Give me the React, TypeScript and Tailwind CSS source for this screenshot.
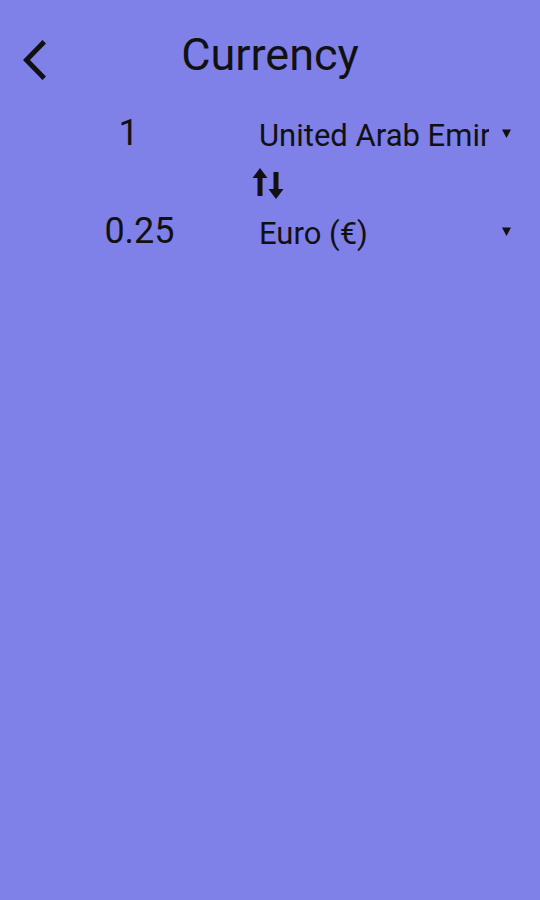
import React from 'react';

const Caret = () => (
  <svg width="9" height="9" viewBox="0 0 9 9" className="shrink-0">
    <path d="M0 0.5h9L4.5 9z" fill="#111" />
  </svg>
);

const CurrencyRow = ({ value, label, shift }: { value: string; label: string; shift: string }) => (
  <div className="flex items-start h-[46px]">
    <div className={`w-[259px] shrink-0 text-center text-[36px] leading-[46px] ${shift}`}>{value}</div>
    <div className="flex items-start h-[46px] w-[252px]">
      <span className="mt-[3px] w-[230px] overflow-hidden whitespace-nowrap text-[31px] leading-[46px]">{label}</span>
      <span className="ml-auto mt-[19px]">
        <Caret />
      </span>
    </div>
  </div>
);

const App = () => {
  return (
    <div className="w-full h-[900px] bg-[#8080e9] text-[#111] font-['Roboto',sans-serif]">
      {/* Toolbar */}
      <div className="grid grid-cols-[1fr_auto_1fr] pt-[29px]">
        <div className="pl-[23px] pt-[11px]">
          <svg width="23" height="40" viewBox="0 2.1 11.67 19.8" preserveAspectRatio="none">
            <path d="M11.67 3.87L9.9 2.1 0 12l9.9 9.9 1.77-1.77L3.54 12z" fill="#111" />
          </svg>
        </div>
        <h1 className="text-[45px] leading-[52px] font-normal">Currency</h1>
        <div />
      </div>

      <div className="mt-[29px]">
        <CurrencyRow value="1" label="United Arab Emir" shift="pr-[2px]" />
      </div>

      {/* Swap button */}
      <div className="mt-[11px] pl-[252px]">
        <svg width="32" height="33" viewBox="0 0 32 33">
          <path d="M8 1L0.5 11H5.5V29H10.5V11H15.5z" fill="#111" />
          <path d="M24 32L16.5 22H21.5V5H26.5V22H31.5z" fill="#111" />
        </svg>
      </div>

      <div className="mt-[8px]">
        <CurrencyRow value="0.25" label="Euro (€)" shift="pl-[20px]" />
      </div>
    </div>
  );
};

export default App;
